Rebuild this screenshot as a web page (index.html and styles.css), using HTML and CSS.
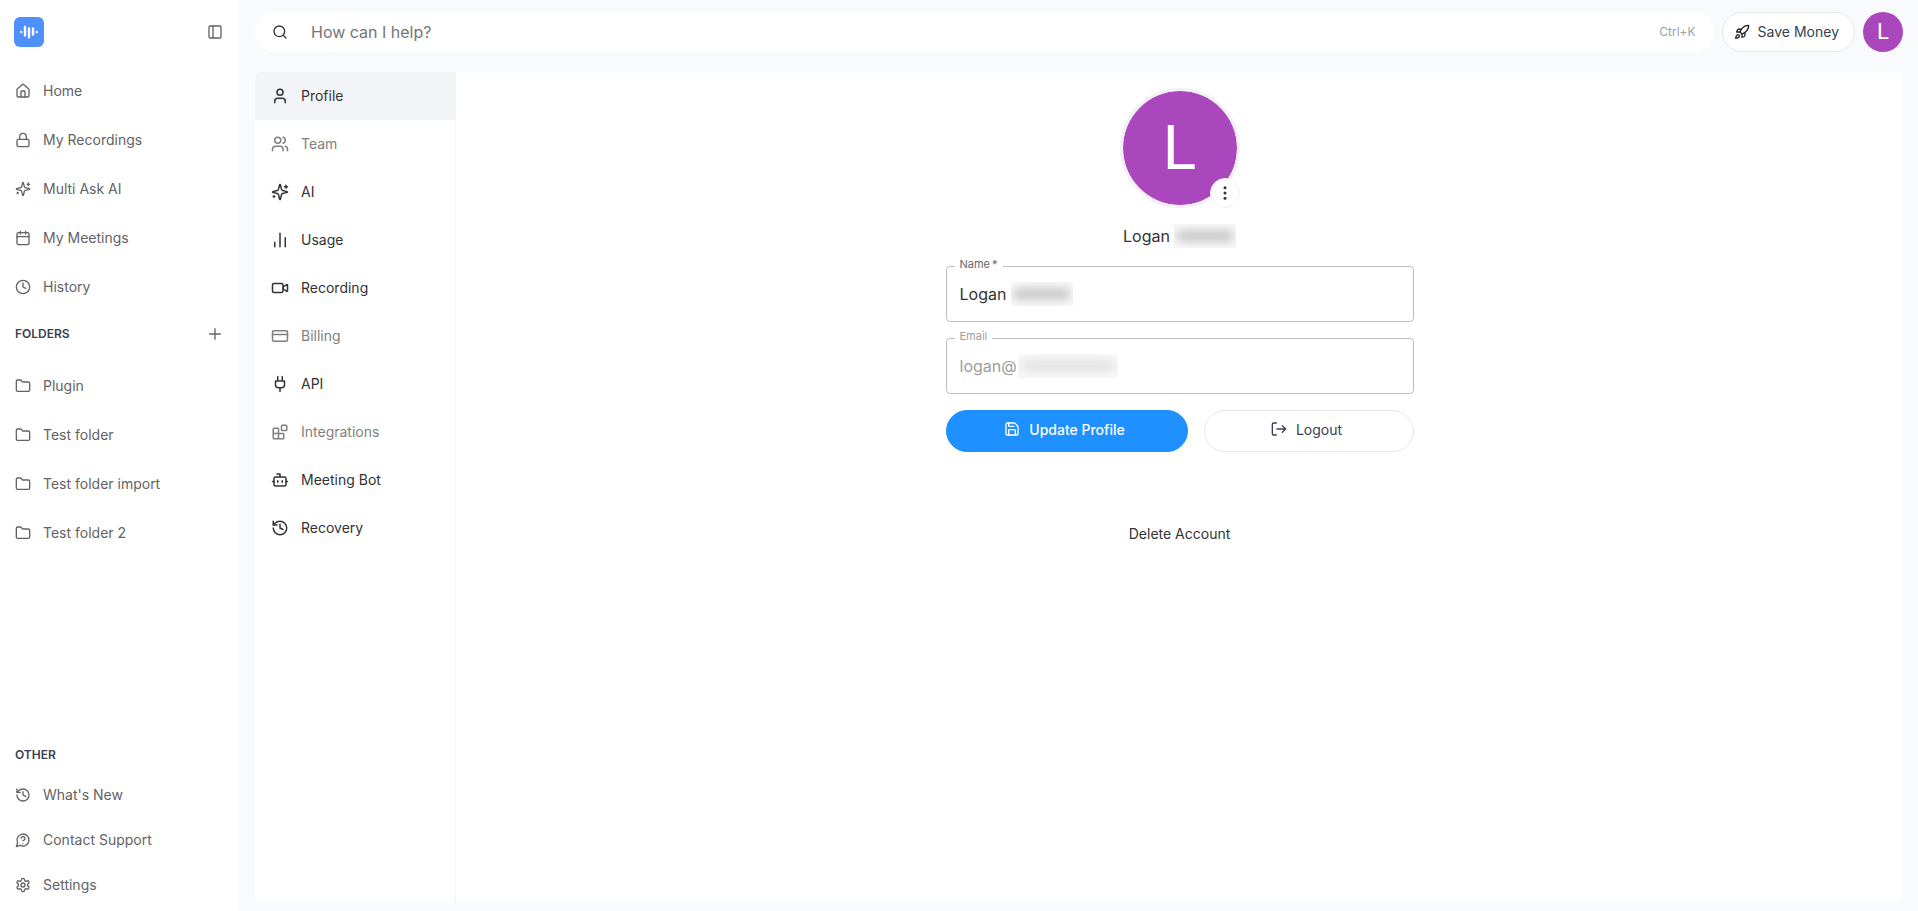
FILE: index.html
```html
<!DOCTYPE html>
<html lang="en">
<head>
  <meta charset="UTF-8" />
  <meta name="viewport" content="width=device-width, initial-scale=1.0"/>
  <title>Profile</title>
  <link rel="stylesheet" href="styles.css">
</head>
<body>

  <!-- Shared icons -->
  <svg class="icon-defs" aria-hidden="true">
    <symbol id="i-folder" viewBox="0 0 24 24"><path d="M20 20a2 2 0 0 0 2-2V8a2 2 0 0 0-2-2h-7.900a2 2 0 0 1-1.690-.9L9.600 3.900A2 2 0 0 0 7.930 3H4a2 2 0 0 0-2 2v13a2 2 0 0 0 2 2Z"/></symbol>
    <symbol id="i-sparkles" viewBox="0 0 24 24"><path d="M9.937 15.500A2 2 0 0 0 8.500 14.063l-6.135-1.582a.5.5 0 0 1 0-.962L8.500 9.936A2 2 0 0 0 9.937 8.500l1.582-6.135a.5.5 0 0 1 .963 0L14.063 8.500A2 2 0 0 0 15.500 9.937l6.135 1.581a.5.5 0 0 1 0 .964L15.500 14.063a2 2 0 0 0-1.437 1.437l-1.582 6.135a.5.5 0 0 1-.963 0z"/><path d="M20 3v4M22 5h-4M4 17v2M5 18H3"/></symbol>
    <symbol id="i-history" viewBox="0 0 24 24"><path d="M3 12a9 9 0 1 0 9-9 9.750 9.750 0 0 0-6.740 2.740L3 8"/><path d="M3 3v5h5M12 7v5l4 2"/></symbol>
  </svg>

  <div class="app">
    <aside class="sidebar">
      <div class="sidebar-header">
        <a href="#" class="logo" aria-label="Home page">
          <svg viewBox="0 0 30 30"><path d="M11 10v8.300M15 11.500v8.700M19 11.500v6"/><path d="M7.200 15h.01M22.800 15h.01"/></svg>
        </a>
        <button type="button" class="icon-btn" aria-label="Toggle sidebar">
          <svg class="icon" viewBox="0 0 24 24"><rect width="18" height="18" x="3" y="3" rx="2"/><path d="M9 3v18"/></svg>
        </button>
      </div>

      <nav class="side-nav">
        <a href="#"><svg class="icon" viewBox="0 0 24 24"><path d="M15 21v-8a1 1 0 0 0-1-1h-4a1 1 0 0 0-1 1v8"/><path d="M3 10a2 2 0 0 1 .709-1.528l7-5.999a2 2 0 0 1 2.582 0l7 5.999A2 2 0 0 1 21 10v9a2 2 0 0 1-2 2H5a2 2 0 0 1-2-2z"/></svg>Home</a>
        <a href="#"><svg class="icon" viewBox="0 0 24 24"><rect width="18" height="11" x="3" y="11" rx="2"/><path d="M7 11V7a5 5 0 0 1 10 0v4"/></svg>My Recordings</a>
        <a href="#"><svg class="icon"><use href="#i-sparkles"/></svg>Multi Ask AI</a>
        <a href="#"><svg class="icon" viewBox="0 0 24 24"><path d="M8 2v4M16 2v4M3 10h18"/><rect width="18" height="18" x="3" y="4" rx="2"/></svg>My Meetings</a>
        <a href="#"><svg class="icon" viewBox="0 0 24 24"><circle cx="12" cy="12" r="10"/><path d="M12 6v6l4 2"/></svg>History</a>
      </nav>

      <div class="side-title">
        <h2>FOLDERS</h2>
        <button type="button" class="icon-btn" aria-label="Add folder">
          <svg class="icon" viewBox="0 0 24 24"><path d="M4 12h16M12 4v16"/></svg>
        </button>
      </div>
      <nav class="side-nav">
        <a href="#"><svg class="icon"><use href="#i-folder"/></svg>Plugin</a>
        <a href="#"><svg class="icon"><use href="#i-folder"/></svg>Test folder</a>
        <a href="#"><svg class="icon"><use href="#i-folder"/></svg>Test folder import</a>
        <a href="#"><svg class="icon"><use href="#i-folder"/></svg>Test folder 2</a>
      </nav>

      <div class="side-footer">
        <h2>OTHER</h2>
        <nav class="side-nav compact">
          <a href="#"><svg class="icon"><use href="#i-history"/></svg>What's New</a>
          <a href="#"><svg class="icon" viewBox="0 0 24 24"><path d="M7.900 20A9 9 0 1 0 4 16.100L2 22Z"/><path d="M9.090 9a3 3 0 0 1 5.830 1c0 2-3 3-3 3M12 17h.01"/></svg>Contact Support</a>
          <a href="#"><svg class="icon" viewBox="0 0 24 24"><path d="M12.220 2h-.44a2 2 0 0 0-2 2v.18a2 2 0 0 1-1 1.730l-.43.25a2 2 0 0 1-2 0l-.15-.08a2 2 0 0 0-2.730.73l-.22.38a2 2 0 0 0 .73 2.730l.15.1a2 2 0 0 1 1 1.720v.51a2 2 0 0 1-1 1.740l-.15.09a2 2 0 0 0-.73 2.730l.22.38a2 2 0 0 0 2.730.73l.15-.08a2 2 0 0 1 2 0l.43.25a2 2 0 0 1 1 1.730V20a2 2 0 0 0 2 2h.44a2 2 0 0 0 2-2v-.18a2 2 0 0 1 1-1.730l.43-.25a2 2 0 0 1 2 0l.15.08a2 2 0 0 0 2.730-.73l.22-.39a2 2 0 0 0-.73-2.730l-.15-.08a2 2 0 0 1-1-1.740v-.5a2 2 0 0 1 1-1.740l.15-.09a2 2 0 0 0 .73-2.730l-.22-.38a2 2 0 0 0-2.730-.73l-.15.08a2 2 0 0 1-2 0l-.43-.25a2 2 0 0 1-1-1.730V4a2 2 0 0 0-2-2z"/><circle cx="12" cy="12" r="3"/></svg>Settings</a>
        </nav>
      </div>
    </aside>

    <main class="main">
      <header class="topbar">
        <label class="search">
          <svg class="icon" viewBox="0 0 24 24"><circle cx="11" cy="11" r="8"/><path d="m21 21-4.300-4.300"/></svg>
          <input type="search" placeholder="How can I help?" aria-label="How can I help?">
          <kbd>Ctrl+K</kbd>
        </label>
        <button type="button" class="save-btn">
          <svg class="icon" viewBox="0 0 24 24"><path d="M4.500 16.500c-1.500 1.260-2 5-2 5s3.740-.5 5-2c.71-.84.7-2.130-.09-2.910a2.180 2.180 0 0 0-2.910-.09z"/><path d="m12 15-3-3a22 22 0 0 1 2-3.950A12.880 12.880 0 0 1 22 2c0 2.720-.78 7.500-6 11a22.350 22.350 0 0 1-4 2z"/><path d="M9 12H4s.55-3.030 2-4c1.620-1.080 5 0 5 0M12 15v5s3.030-.55 4-2c1.080-1.620 0-5 0-5"/></svg>
          Save Money
        </button>
        <button type="button" class="avatar">L</button>
      </header>

      <div class="panel">
        <nav class="settings-nav">
          <a href="#" class="active"><svg class="icon" viewBox="0 0 24 24"><circle cx="12" cy="7" r="4"/><path d="M19 21v-2a4 4 0 0 0-4-4H9a4 4 0 0 0-4 4v2"/></svg>Profile</a>
          <a href="#" class="locked"><svg class="icon" viewBox="0 0 24 24"><path d="M16 21v-2a4 4 0 0 0-4-4H6a4 4 0 0 0-4 4v2"/><circle cx="9" cy="7" r="4"/><path d="M22 21v-2a4 4 0 0 0-3-3.870M16 3.130a4 4 0 0 1 0 7.750"/></svg>Team</a>
          <a href="#"><svg class="icon"><use href="#i-sparkles"/></svg>AI</a>
          <a href="#"><svg class="icon" viewBox="0 0 24 24"><path d="M5 21v-6M12 21V3M19 21V9"/></svg>Usage</a>
          <a href="#"><svg class="icon" viewBox="0 0 24 24"><path d="m16 13 5.223 3.482a.5.5 0 0 0 .777-.416V7.870a.5.5 0 0 0-.752-.432L16 10.500"/><rect x="2" y="6" width="14" height="12" rx="2"/></svg>Recording</a>
          <a href="#" class="locked"><svg class="icon" viewBox="0 0 24 24"><rect width="20" height="14" x="2" y="5" rx="2"/><path d="M2 10h20"/></svg>Billing</a>
          <a href="#"><svg class="icon" viewBox="0 0 24 24"><path d="M12 22v-5M9 8V2M15 8V2M18 8v5a4 4 0 0 1-4 4h-4a4 4 0 0 1-4-4V8Z"/></svg>API</a>
          <a href="#" class="locked"><svg class="icon" viewBox="0 0 24 24"><rect width="7" height="7" x="14" y="3" rx="1"/><path d="M10 21V8a1 1 0 0 0-1-1H4a1 1 0 0 0-1 1v12a1 1 0 0 0 1 1h12a1 1 0 0 0 1-1v-5a1 1 0 0 0-1-1H3"/></svg>Integrations</a>
          <a href="#"><svg class="icon" viewBox="0 0 24 24"><path d="M12 8V4H8"/><rect width="16" height="12" x="4" y="8" rx="2"/><path d="M2 14h2M20 14h2M15 13v2M9 13v2"/></svg>Meeting Bot</a>
          <a href="#"><svg class="icon"><use href="#i-history"/></svg>Recovery</a>
        </nav>

        <section class="profile">
          <div class="photo">
            <span>L</span>
            <button type="button" class="photo-menu" aria-label="Photo options">
              <svg viewBox="0 0 24 24"><circle cx="12" cy="5" r="2"/><circle cx="12" cy="12" r="2"/><circle cx="12" cy="19" r="2"/></svg>
            </button>
          </div>
          <h1>Logan <span class="redacted"></span></h1>

          <form class="profile-form">
            <div class="field">
              <label for="name">Name&thinsp;*</label>
              <input type="text" id="name" value="Logan" required>
              <span class="redacted name-mask"></span>
            </div>
            <div class="field disabled">
              <label for="email">Email</label>
              <input type="text" id="email" value="logan@" disabled>
              <span class="redacted email-mask"></span>
            </div>
            <div class="actions">
              <button type="submit" class="btn primary">
                <svg class="icon" viewBox="0 0 24 24"><path d="M15.200 3a2 2 0 0 1 1.400.6l3.800 3.800a2 2 0 0 1 .6 1.400V19a2 2 0 0 1-2 2H5a2 2 0 0 1-2-2V5a2 2 0 0 1 2-2z"/><path d="M17 21v-7a1 1 0 0 0-1-1H8a1 1 0 0 0-1 1v7M7 3v4a1 1 0 0 0 1 1h7"/></svg>
                Update Profile
              </button>
              <button type="button" class="btn">
                <svg class="icon" viewBox="0 0 24 24"><path d="M8 3H4a2 2 0 0 0-2 2v14a2 2 0 0 0 2 2h4M17 17l5-5-5-5M22 12H9"/></svg>
                Logout
              </button>
            </div>
          </form>

          <button type="button" class="delete-btn">Delete Account</button>
        </section>
      </div>
    </main>
  </div>

</body>
</html>
```

FILE: styles.css
```css
* {
  box-sizing: border-box;
  margin: 0;
  padding: 0;
}

body {
  font-family: Inter, 'Noto Sans', sans-serif;
  font-size: 14px;
  line-height: 20px;
  color: #333333;
  background-color: #f9fafc;
}

a {
  color: inherit;
  text-decoration: none;
}

button,
input,
kbd {
  font: inherit;
  color: inherit;
}

button {
  background: none;
  border: none;
  cursor: pointer;
}

.icon-defs {
  display: none;
}

.icon {
  width: 16px;
  height: 16px;
  flex-shrink: 0;
  fill: none;
  stroke: currentColor;
  stroke-width: 2;
  stroke-linecap: round;
  stroke-linejoin: round;
}

.app {
  display: flex;
  height: 100vh;
}

/* Sidebar */
.sidebar {
  width: 239px;
  flex-shrink: 0;
  display: flex;
  flex-direction: column;
  background-color: #ffffff;
  color: #636363;
}

.sidebar-header {
  display: flex;
  align-items: center;
  justify-content: space-between;
  height: 66px;
  padding: 0 16px 2px 14px;
}

.logo {
  width: 30px;
  height: 30px;
  border-radius: 6px;
  background-color: #5090fc;
}

.logo svg {
  display: block;
  fill: none;
  stroke: #ffffff;
  stroke-width: 2.4;
  stroke-linecap: round;
}

.icon-btn {
  display: flex;
}

.side-nav {
  display: flex;
  flex-direction: column;
}

.side-nav a {
  display: flex;
  align-items: center;
  gap: 12px;
  height: 49px;
  padding: 0 15px;
}

.side-nav.compact a {
  height: 45px;
}

.sidebar h2 {
  font-size: 12px;
  font-weight: 600;
  line-height: 20px;
  color: #374151;
}

.side-title {
  display: flex;
  align-items: center;
  justify-content: space-between;
  height: 50px;
  padding: 0 16px 4px 15px;
}

.side-footer {
  margin-top: auto;
  padding-bottom: 4px;
}

.side-footer h2 {
  padding: 0 15px;
  margin-bottom: 7px;
}

/* Top bar */
.main {
  flex: 1;
  display: flex;
  flex-direction: column;
  gap: 20px;
  min-width: 0;
  padding: 12px 15px 8px 16px;
}

.topbar {
  display: flex;
  align-items: center;
  gap: 8px;
}

.search {
  flex: 1;
  display: flex;
  align-items: center;
  height: 40px;
  padding: 0 18px 0 17px;
  border-radius: 20px;
  background-color: #ffffff;
}

.search input {
  flex: 1;
  min-width: 0;
  margin-left: 23px;
  border: none;
  outline: none;
  background: none;
  font-size: 16px;
}

.search input::placeholder {
  color: #757575;
}

.search kbd {
  font-size: 12px;
  color: #9e9e9e;
}

.save-btn {
  display: flex;
  align-items: center;
  gap: 8px;
  height: 40px;
  padding: 0 15px 0 11px;
  border: 1px solid #e5e7eb;
  border-radius: 20px;
  background-color: #ffffff;
  color: #374151;
}

.save-btn .icon {
  color: #222222;
}

.avatar {
  width: 40px;
  height: 40px;
  border-radius: 50%;
  background-color: #ab47bc;
  color: #ffffff;
  font-family: Roboto, sans-serif;
  font-size: 22px;
}

/* Settings panel */
.panel {
  flex: 1;
  display: flex;
  overflow: hidden;
  border-radius: 8px;
  background-color: #ffffff;
}

.settings-nav {
  width: 201px;
  flex-shrink: 0;
  border-right: 1px solid #f3f4f6;
}

.settings-nav a {
  display: flex;
  align-items: center;
  gap: 12px;
  height: 48px;
  padding: 0 16px;
}

.settings-nav .icon {
  width: 18px;
  height: 18px;
}

.settings-nav .active {
  background-color: #f3f4f6;
}

.settings-nav .locked {
  color: #7f7f7f;
}

.profile {
  flex: 1;
  display: flex;
  flex-direction: column;
  align-items: center;
  padding: 16px;
}

.photo {
  position: relative;
  display: flex;
  align-items: center;
  justify-content: center;
  width: 120px;
  height: 120px;
  border: 3px solid #f3f0f5;
  border-radius: 50%;
  background-color: #ab47bc;
  background-clip: padding-box;
  color: #ffffff;
  font-family: Roboto, sans-serif;
  font-size: 62px;
}

.photo-menu {
  position: absolute;
  right: -3px;
  bottom: -3px;
  display: flex;
  align-items: center;
  justify-content: center;
  width: 30px;
  height: 30px;
  border: 1px solid #f3f3f5;
  border-radius: 50%;
  background-color: #ffffff;
}

.photo-menu svg {
  width: 18px;
  height: 18px;
  fill: #333333;
}

.profile h1 {
  display: flex;
  align-items: center;
  gap: 4px;
  height: 24px;
  margin: 16px 0 18px;
  font-size: 16px;
  font-weight: 400;
}

/* Hidden personal data */
.redacted {
  display: block;
  width: 62px;
  height: 24px;
  overflow: hidden;
  background-color: #f9f9f9;
}

.redacted::before {
  content: '';
  display: block;
  height: 12px;
  margin: 6px 2px;
  border-radius: 6px;
  background-color: #c8c8c8;
  filter: blur(5px);
}

.profile-form {
  display: flex;
  flex-direction: column;
  gap: 16px;
  width: 100%;
  max-width: 468px;
}

.field {
  position: relative;
}

.field label {
  position: absolute;
  top: -8px;
  left: 9px;
  padding: 0 5px;
  background-color: #ffffff;
  color: #666666;
  font-size: 11px;
  line-height: 12px;
}

.field input {
  display: block;
  width: 100%;
  height: 56px;
  padding: 0 13px;
  border: 1px solid #bdbdbd;
  border-radius: 4px;
  background-color: #ffffff;
  font-size: 16px;
}

.field.disabled label,
.field.disabled input {
  color: #9e9e9e;
}

.name-mask,
.email-mask {
  position: absolute;
  top: 16px;
}

.name-mask {
  left: 65px;
}

.email-mask {
  left: 72px;
  width: 100px;
}

.email-mask::before {
  background-color: #e3e3e3;
}

.actions {
  display: grid;
  grid-template-columns: 242fr 210fr;
  gap: 16px;
}

.btn {
  display: flex;
  align-items: center;
  justify-content: center;
  gap: 9px;
  height: 42px;
  padding: 0 4px 2px 0;
  border: 1px solid #e5e7eb;
  border-radius: 21px;
  color: #374151;
}

.btn .icon {
  margin-bottom: 2px;
}

.btn.primary {
  border-color: #1e90ff;
  background-color: #1e90ff;
  color: #ffffff;
  font-weight: 500;
}

.delete-btn {
  margin-top: 72px;
}
```
